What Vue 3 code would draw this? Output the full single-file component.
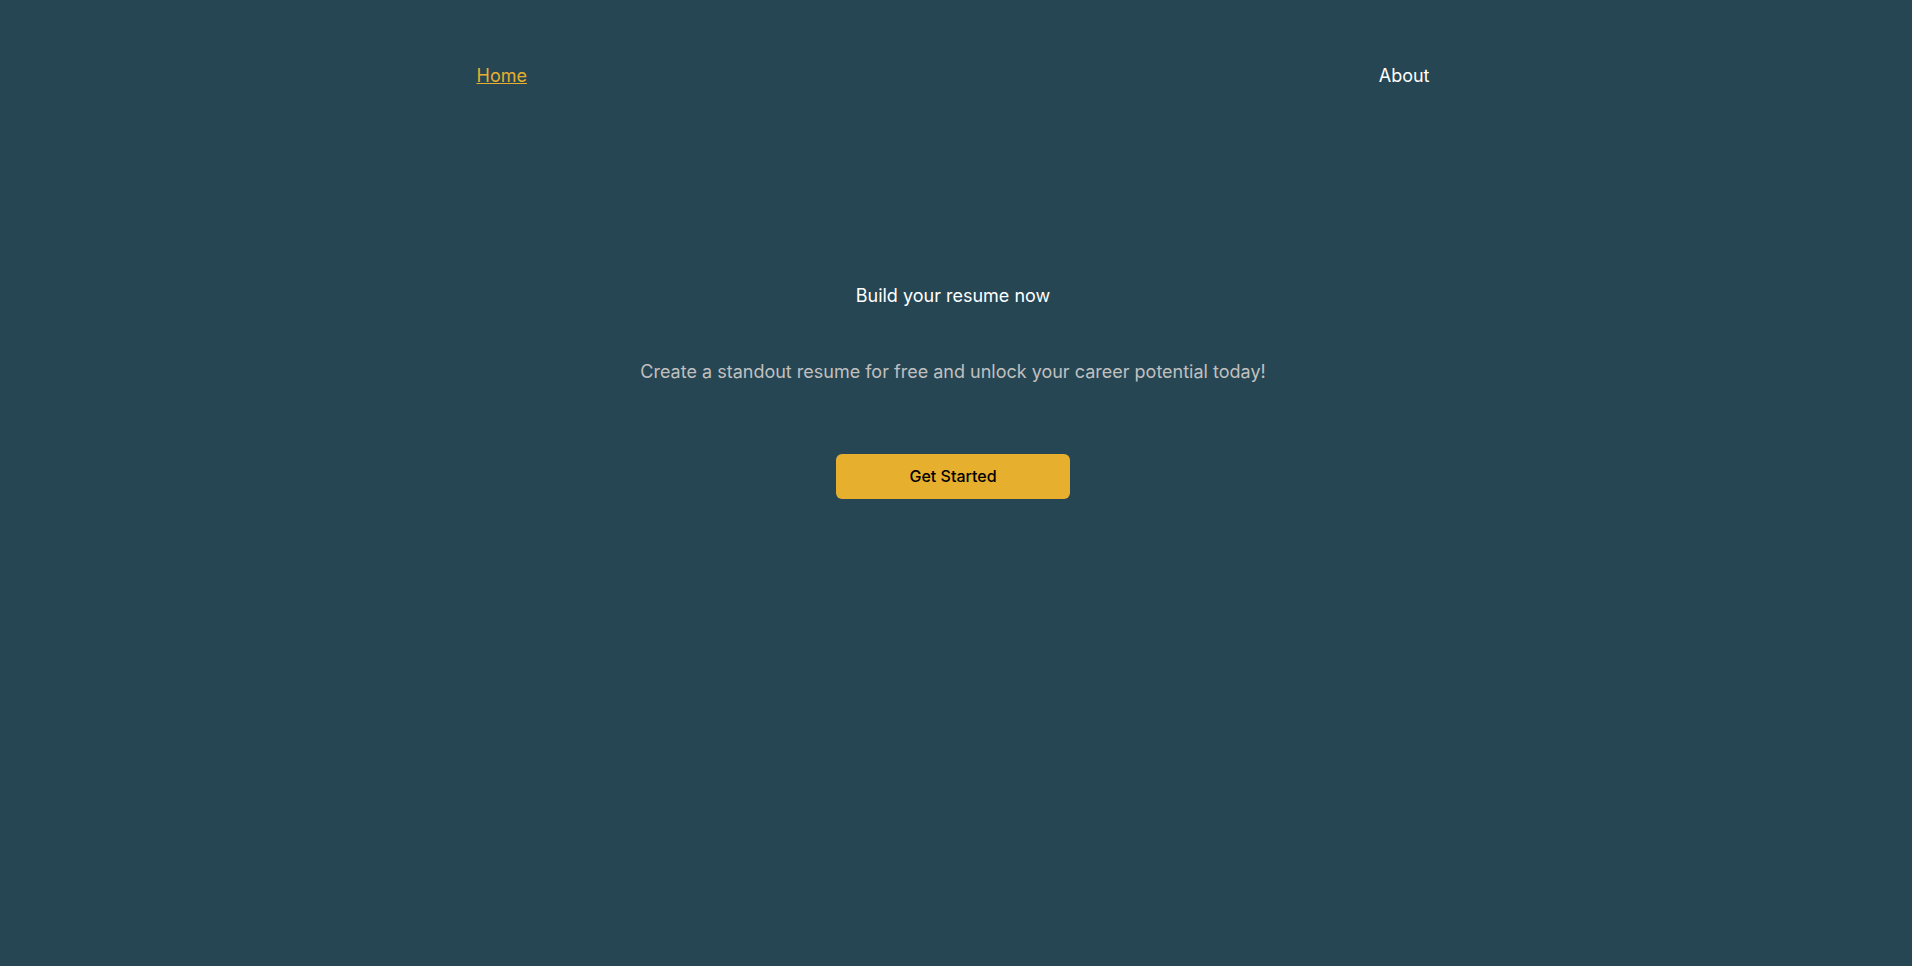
<script setup>
const links = [
  { label: 'Home', href: '#home', active: true },
  { label: 'About', href: '#about', active: false },
]
</script>

<template>
  <div class="page">
    <header>
      <nav class="nav">
        <a v-for="l in links" :key="l.label" :href="l.href" class="link" :class="{ active: l.active }">{{ l.label }}</a>
      </nav>
    </header>
    <main class="hero">
      <h1 class="title">Build your resume now</h1>
      <p class="lead">Create a standout resume for free and unlock your career potential today!</p>
      <button type="button" class="cta">Get Started</button>
    </main>
  </div>
</template>

<style>
body {
  background: #264653;
}
</style>

<style scoped>
.page {
  min-height: 100vh;
  box-sizing: border-box;
  padding: 62px 6px 24px 0;
  background: #264653;
  color: #fff;
  font-family: Inter, sans-serif;
  font-size: 18px;
  line-height: 28px;
}
.nav {
  display: flex;
  justify-content: space-between;
  width: 50%;
  min-width: 280px;
  margin: 0 auto;
}
.link {
  color: inherit;
  text-decoration: none;
}
.active {
  color: #e6af2e;
  text-decoration: underline;
}
.hero {
  display: flex;
  flex-direction: column;
  align-items: center;
  margin-top: 192px;
  text-align: center;
}
.title,
.lead {
  margin: 0 0 48px;
  font-size: 18px;
  font-weight: 400;
}
.lead {
  color: #c0c0c0;
  margin-bottom: 68px;
}
.cta {
  width: 234px;
  max-width: 100%;
  padding: 10px 16px 11px;
  border: 0;
  border-radius: 6px;
  background: #e6af2e;
  color: #000;
  font: 500 16px/24px Inter, sans-serif;
  cursor: pointer;
}
</style>
